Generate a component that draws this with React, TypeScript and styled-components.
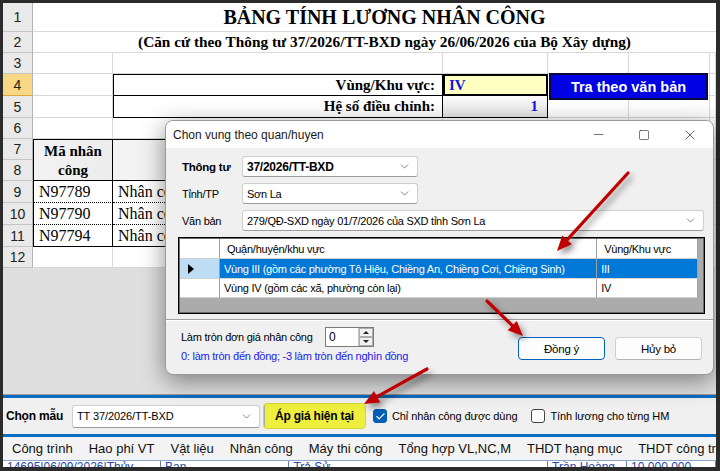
import React from 'react';
import styled, { createGlobalStyle } from 'styled-components';
import { ChevronDown, Minus, Square, X, Check } from 'lucide-react';

const GlobalStyle = createGlobalStyle`
  html, body {
    margin: 0;
    padding: 0;
    background: #2b2b2b;
  }
  * {
    box-sizing: border-box;
  }
`;

type Pt = [number, number];

const Frame = styled.div`
  position: relative;
  width: 720px;
  height: 471px;
  background: #2b2b2b;
  padding: 3px 4px 4px 3px;
  display: flex;
  flex-direction: column;
  overflow: hidden;
  font-family: 'Liberation Sans', Arial, sans-serif;
`;

/* ---------- spreadsheet ---------- */

const SheetArea = styled.div`
  height: 392px;
  background: #dfdfdf;
  border-bottom: 1px solid #9c9c9c;
`;

const Sheet = styled.div`
  display: grid;
  grid-template-columns: 30px 80px 330px 105px 81px 81px 6px;
  grid-template-rows: 29px 21px 21px 22px 22px 21px 21px 21px 22px 22px 22px 21px;
  background: #fff;
  font-family: 'Liberation Serif', 'Times New Roman', serif;
  color: #000;
`;

const RowHead = styled.div<{ $active?: boolean }>`
  background: ${p => (p.$active ? '#f8d884' : '#e9e9e9')};
  border-right: 1px solid #b4b4b4;
  border-bottom: 1px solid ${p => (p.$active ? '#e2a640' : '#c6c6c6')};
  display: flex;
  align-items: center;
  justify-content: center;
  font-family: 'Liberation Sans', Arial, sans-serif;
  font-size: 14px;
  color: #222;
`;

const Cell = styled.div<{ $span?: number; $rows?: number; $align?: 'left' | 'center' | 'right' }>`
  grid-column: span ${p => p.$span ?? 1};
  grid-row: span ${p => p.$rows ?? 1};
  border-right: 1px solid #d8d8d8;
  border-bottom: 1px solid #d8d8d8;
  display: flex;
  align-items: center;
  justify-content: ${p => (p.$align === 'right' ? 'flex-end' : p.$align === 'center' ? 'center' : 'flex-start')};
  white-space: nowrap;
  overflow: hidden;
  min-width: 0;
`;

const Heading = styled(Cell)<{ $size: number }>`
  border-right: none;
  padding-left: 20px;
  font-weight: bold;
  font-size: ${p => p.$size}px;
  overflow: visible;
`;

const LabelCell = styled(Cell)<{ $top?: boolean }>`
  border: 1px solid #000;
  border-top: ${p => (p.$top ? '1px solid #000' : 'none')};
  padding-right: 7px;
  font-weight: bold;
  font-size: 15px;
`;

const InputCell = styled(Cell)`
  border: 2px solid #000;
  background: #ffffc2;
  padding-left: 4px;
  font-weight: bold;
  font-size: 15px;
  color: #1414e6;
`;

const ValueCell = styled(Cell)`
  border-right: 1px solid #000;
  border-bottom: 1px solid #000;
  background: linear-gradient(#fbfbfb, #e6e6e6);
  padding-right: 9px;
  font-weight: bold;
  font-size: 15px;
  color: #1414e6;
`;

const ButtonCell = styled(Cell)`
  overflow: visible;
  align-items: flex-start;
`;

const BlueButton = styled.div`
  position: relative;
  z-index: 1;
  margin: -1px 0 0 1px;
  width: 159px;
  height: 27px;
  background: #0000e4;
  border: 2px solid #0a0a3a;
  color: #fff;
  font-family: 'Liberation Sans', Arial, sans-serif;
  font-weight: bold;
  font-size: 14.5px;
  display: flex;
  align-items: center;
  justify-content: center;
`;

const HeadCell = styled(Cell)<{ $first?: boolean }>`
  border: 1px solid #000;
  border-left: ${p => (p.$first ? '1px solid #000' : 'none')};
  background: linear-gradient(90deg, #f3f3f3, #ececec);
  font-weight: bold;
  font-size: 15px;
  line-height: 19px;
  text-align: center;
  white-space: normal;
  padding-top: 2px;
`;

const DataCell = styled(Cell)<{ $first?: boolean; $last?: boolean }>`
  border-right: 1px solid #000;
  border-left: ${p => (p.$first ? '1px solid #000' : 'none')};
  border-bottom: 1px ${p => (p.$last ? 'solid' : 'dotted')} #000;
  padding-left: 5px;
  font-size: 16px;
`;

/* ---------- dialog ---------- */

const Dialog = styled.div`
  position: absolute;
  left: 165px;
  top: 120px;
  width: 549px;
  height: 255px;
  background: #f0f0f0;
  border: 1px solid #9a9a9a;
  border-radius: 8px;
  box-shadow: 0 6px 24px rgba(0, 0, 0, 0.45);
  display: flex;
  flex-direction: column;
  overflow: hidden;
  font-size: 11px;
  letter-spacing: -0.25px;
  color: #000;
`;

const TitleBar = styled.div`
  height: 27px;
  flex: none;
  background: #fff;
  display: flex;
  align-items: center;
  padding-left: 7px;
  font-size: 12px;
  letter-spacing: 0;
`;

const TitleText = styled.div`
  flex: 1;
  color: #1a1a1a;
`;

const WinButton = styled.div`
  width: 46px;
  height: 27px;
  display: flex;
  align-items: center;
  justify-content: center;
  color: #222;
`;

const DialogBody = styled.div`
  padding: 8px 10px 0 12px;
  display: flex;
  flex-direction: column;
  gap: 6px;
`;

const FormRow = styled.div`
  display: flex;
  align-items: center;
  gap: 6px;
  padding-left: 4px;
`;

const FieldLabel = styled.div<{ $bold?: boolean }>`
  width: 54px;
  flex: none;
  white-space: nowrap;
  font-weight: ${p => (p.$bold ? 'bold' : 'normal')};
  font-size: ${p => (p.$bold ? '11.5px' : '11px')};
`;

const Combo = styled.div<{ $w: number; $bold?: boolean; $h?: number }>`
  width: ${p => p.$w}px;
  height: ${p => p.$h ?? 21}px;
  flex: none;
  background: #fff;
  border: 1px solid #cfcfcf;
  border-bottom-color: #9c9c9c;
  border-radius: 3px;
  display: flex;
  align-items: center;
  padding: 0 6px 0 4px;
  font-weight: ${p => (p.$bold ? 'bold' : 'normal')};
  font-size: ${p => (p.$bold ? '12px' : 'inherit')};
  white-space: nowrap;
`;

const ComboText = styled.span`
  flex: 1;
  overflow: hidden;
`;

const RegionGrid = styled.div`
  width: 527px;
  height: 77px;
  border: 1px solid #000;
  box-shadow: inset 0 0 0 1px #6a6a6a;
  background: #ababab;
  padding: 1px 6px 0 1px;
`;

const GridRow = styled.div<{ $h: number }>`
  display: flex;
  height: ${p => p.$h}px;
`;

const GridCell = styled.div<{ $w: number; $tone?: 'plain' | 'selected' | 'marker'; $pad?: number }>`
  width: ${p => p.$w}px;
  height: 100%;
  display: flex;
  align-items: center;
  padding-left: ${p => p.$pad ?? 4}px;
  border-right: 1px solid #a0a0a0;
  border-bottom: 1px solid ${p => (p.$tone === 'selected' ? '#d6d6d6' : '#d0d0d0')};
  background: ${p =>
    p.$tone === 'selected' ? '#0078d7' : p.$tone === 'marker' ? '#bedcf4' : '#fff'};
  color: ${p => (p.$tone === 'selected' ? '#fff' : '#000')};
  white-space: nowrap;
  overflow: hidden;
`;

const RowMarker = styled.div`
  width: 0;
  height: 0;
  margin-left: 4px;
  border-top: 5px solid transparent;
  border-bottom: 5px solid transparent;
  border-left: 6px solid #000;
`;

const Divider = styled.div`
  margin-top: 5px;
  border-top: 1px solid #a0a0a0;
  border-bottom: 1px solid #fff;
`;

const DialogFooter = styled.div`
  display: flex;
  padding: 6px 11px 0 15px;
`;

const FooterLeft = styled.div`
  flex: 1;
  display: flex;
  flex-direction: column;
  gap: 3px;
`;

const SpinRow = styled.div`
  display: flex;
  align-items: center;
`;

const SpinLabel = styled.div`
  width: 144px;
  white-space: nowrap;
`;

const SpinBox = styled.div`
  width: 49px;
  height: 20px;
  background: #fff;
  border: 1px solid #7a7a7a;
  display: flex;
  align-items: stretch;
  font-size: 12px;
`;

const SpinValue = styled.div`
  flex: 1;
  padding-left: 3px;
  display: flex;
  align-items: center;
`;

const SpinButtons = styled.div`
  width: 15px;
  display: flex;
  flex-direction: column;
  border-left: 1px solid #c8c8c8;
`;

const SpinStep = styled.div<{ $down?: boolean }>`
  flex: 1;
  background: #f2f2f2;
  border: 1px solid #adadad;
  display: flex;
  align-items: center;
  justify-content: center;
  &::after {
    content: '';
    border-left: 3px solid transparent;
    border-right: 3px solid transparent;
    ${p => (p.$down ? 'border-top: 3px solid #222;' : 'border-bottom: 3px solid #222;')}
  }
`;

const Hint = styled.div`
  color: #2020f0;
  white-space: nowrap;
`;

const FooterButtons = styled.div`
  display: flex;
  gap: 10px;
  margin-top: 10px;
  align-self: flex-start;
`;

const DialogButton = styled.div<{ $focused?: boolean }>`
  width: 87px;
  height: 23px;
  background: #fdfdfd;
  border: 1px solid ${p => (p.$focused ? '#0060c0' : '#d0d0d0')};
  border-bottom-color: ${p => (p.$focused ? '#0060c0' : '#b4b4b4')};
  border-radius: 4px;
  display: flex;
  align-items: center;
  justify-content: center;
  font-size: 11.5px;
`;

/* ---------- bottom toolbar and tabs ---------- */

const BlueRule = styled.div`
  height: 3px;
  flex: none;
  background: #0d6cc0;
`;

const Toolbar = styled.div`
  height: 36px;
  flex: none;
  background: #f0f0f0;
  display: flex;
  align-items: center;
  padding-left: 3px;
  font-size: 11px;
  letter-spacing: -0.1px;
  color: #000;
  white-space: nowrap;
`;

const ToolLabel = styled.div`
  font-weight: bold;
  font-size: 12px;
  letter-spacing: -0.2px;
  width: 66px;
`;

const ApplyButton = styled.div`
  margin-left: 3px;
  width: 103px;
  height: 26px;
  border-radius: 4px;
  background: #eeee3e;
  border: 1px solid #d7d73a;
  display: flex;
  align-items: center;
  justify-content: center;
  font-weight: bold;
  font-size: 12px;
  letter-spacing: -0.2px;
  box-shadow: inset 4px 0 0 -3px #a8a8a8;
`;

const CheckItem = styled.div<{ $gap: number }>`
  display: flex;
  align-items: center;
  gap: 5px;
  margin-left: ${p => p.$gap}px;
  font-size: 11px;
`;

const CheckBox = styled.div<{ $checked?: boolean }>`
  width: 14px;
  height: 14px;
  border-radius: 3px;
  border: 1px solid ${p => (p.$checked ? '#005fb8' : '#444')};
  background: ${p => (p.$checked ? '#005fb8' : '#fff')};
  display: flex;
  align-items: center;
  justify-content: center;
  color: #fff;
`;

const Tabs = styled.div`
  height: 24px;
  flex: none;
  background: #f3f3f3;
  display: flex;
  align-items: center;
  padding-left: 1px;
  font-size: 13px;
  color: #111;
  white-space: nowrap;
  overflow: hidden;
  border-bottom: 1px solid #8aa8cc;
`;

const Tab = styled.div`
  padding: 0 8px;
`;

const PeekRow = styled.div`
  height: 6px;
  flex: none;
  background: #fff;
  overflow: hidden;
  display: flex;
  font-size: 12px;
  color: #2a48a8;
  white-space: nowrap;
  line-height: 14px;
`;

const PeekCell = styled.div<{ $w: number }>`
  width: ${p => p.$w}px;
  padding-left: 4px;
  margin-top: -1px;
  border-right: 1px solid #6c7fb8;
  overflow: hidden;
`;

/* ---------- red callout arrows ---------- */

const Overlay = styled.svg`
  position: absolute;
  left: 0;
  top: 0;
  pointer-events: none;
  filter: drop-shadow(3px 4px 3px rgba(0, 0, 0, 0.45));
`;

const arrows: { from: Pt; to: Pt }[] = [
  { from: [628, 173], to: [557, 251] },
  { from: [487, 301], to: [523, 336] },
  { from: [427, 369], to: [364, 404] },
];

function Arrow({ from, to }: { from: Pt; to: Pt }) {
  const dx = to[0] - from[0];
  const dy = to[1] - from[1];
  const len = Math.hypot(dx, dy);
  const ux = dx / len;
  const uy = dy / len;
  const bx = to[0] - ux * 15;
  const by = to[1] - uy * 15;
  const nx = -uy;
  const ny = ux;
  const head = `${to[0]},${to[1]} ${bx + nx * 6.5},${by + ny * 6.5} ${bx - nx * 6.5},${by - ny * 6.5}`;
  return (
    <g>
      <line x1={from[0]} y1={from[1]} x2={bx + ux * 2} y2={by + uy * 2} stroke="#c00000" strokeWidth={3.2} strokeLinecap="round" />
      <polygon points={head} fill="#c00000" />
    </g>
  );
}

const workers = [
  { code: 'N97789', name: 'Nhân công bậc 3,5/7 - Nhóm 1' },
  { code: 'N97790', name: 'Nhân công bậc 4,0/7 - Nhóm 1' },
  { code: 'N97794', name: 'Nhân công bậc 3,0/7 - Nhóm 2' },
];

const regions = [
  { name: 'Vùng III (gồm các phường Tô Hiệu, Chiềng An, Chiềng Cơi, Chiềng Sinh)', zone: 'III' },
  { name: 'Vùng IV (gồm các xã, phường còn lại)', zone: 'IV' },
];

const tabs = ['Công trình', 'Hao phí VT', 'Vật liệu', 'Nhân công', 'Máy thi công', 'Tổng hợp VL,NC,M', 'THDT hạng mục', 'THDT công trình'];

function Blank({ n }: { n: number }) {
  return (
    <>
      {Array.from({ length: n }, (_, i) => (
        <Cell key={i} />
      ))}
    </>
  );
}

export default function App() {
  return (
    <Frame>
      <GlobalStyle />
      <SheetArea>
        <Sheet>
          <RowHead>1</RowHead>
          <Heading $span={6} $size={20} $align="center">BẢNG TÍNH LƯƠNG NHÂN CÔNG</Heading>

          <RowHead>2</RowHead>
          <Heading $span={6} $size={15.3} $align="center">(Căn cứ theo Thông tư 37/2026/TT-BXD ngày 26/06/2026 của Bộ Xây dựng)</Heading>

          <RowHead>3</RowHead>
          <Blank n={6} />

          <RowHead $active>4</RowHead>
          <Cell />
          <LabelCell $top $align="right">Vùng/Khu vực:</LabelCell>
          <InputCell>IV</InputCell>
          <ButtonCell $span={2}>
            <BlueButton>Tra theo văn bản</BlueButton>
          </ButtonCell>
          <Cell />

          <RowHead>5</RowHead>
          <Cell />
          <LabelCell $align="right">Hệ số điều chỉnh:</LabelCell>
          <ValueCell $align="right">1</ValueCell>
          <Blank n={3} />

          <RowHead>6</RowHead>
          <Blank n={6} />

          <RowHead>7</RowHead>
          <HeadCell $rows={2} $first $align="center">Mã nhân<br />công</HeadCell>
          <HeadCell $rows={2} $align="center">Tên nhân công</HeadCell>
          <Blank n={4} />
          <RowHead>8</RowHead>
          <Blank n={4} />

          {workers.map((w, i) => (
            <React.Fragment key={w.code}>
              <RowHead>{9 + i}</RowHead>
              <DataCell $first $last={i === workers.length - 1}>{w.code}</DataCell>
              <DataCell $last={i === workers.length - 1}>{w.name}</DataCell>
              <Blank n={4} />
            </React.Fragment>
          ))}

          <RowHead>12</RowHead>
          <Blank n={6} />
        </Sheet>
      </SheetArea>

      <BlueRule />
      <Toolbar>
        <ToolLabel>Chọn mẫu</ToolLabel>
        <Combo $w={188} $h={23}>
          <ComboText>TT 37/2026/TT-BXD</ComboText>
          <ChevronDown size={13} strokeWidth={1.3} color="#555" />
        </Combo>
        <ApplyButton>Áp giá hiện tại</ApplyButton>
        <CheckItem $gap={7}>
          <CheckBox $checked>
            <Check size={11} strokeWidth={2.4} />
          </CheckBox>
          <span>Chỉ nhân công được dùng</span>
        </CheckItem>
        <CheckItem $gap={14}>
          <CheckBox />
          <span>Tính lương cho từng HM</span>
        </CheckItem>
      </Toolbar>
      <BlueRule />
      <Tabs>
        {tabs.map(t => (
          <Tab key={t}>{t}</Tab>
        ))}
      </Tabs>
      <PeekRow>
        <PeekCell $w={160}>14695|06/09/2026|Thủy</PeekCell>
        <PeekCell $w={130}>Ban</PeekCell>
        <PeekCell $w={262}>Trả Sử</PeekCell>
        <PeekCell $w={80}>Trần Hoàng</PeekCell>
        <PeekCell $w={90}>10.000.000</PeekCell>
      </PeekRow>

      <Dialog>
        <TitleBar>
          <TitleText>Chon vung theo quan/huyen</TitleText>
          <WinButton>
            <Minus size={15} strokeWidth={1} />
          </WinButton>
          <WinButton>
            <Square size={12} strokeWidth={1.2} />
          </WinButton>
          <WinButton>
            <X size={16} strokeWidth={1} />
          </WinButton>
        </TitleBar>
        <DialogBody>
          <FormRow>
            <FieldLabel $bold>Thông tư</FieldLabel>
            <Combo $w={176} $bold>
              <ComboText>37/2026/TT-BXD</ComboText>
              <ChevronDown size={13} strokeWidth={1.3} color="#555" />
            </Combo>
          </FormRow>
          <FormRow>
            <FieldLabel>Tỉnh/TP</FieldLabel>
            <Combo $w={176}>
              <ComboText>Sơn La</ComboText>
              <ChevronDown size={13} strokeWidth={1.3} color="#555" />
            </Combo>
          </FormRow>
          <FormRow>
            <FieldLabel>Văn bản</FieldLabel>
            <Combo $w={462}>
              <ComboText>279/QĐ-SXD ngày 01/7/2026 của SXD tỉnh Sơn La</ComboText>
              <ChevronDown size={13} strokeWidth={1.3} color="#555" />
            </Combo>
          </FormRow>
          <RegionGrid>
            <GridRow $h={20}>
              <GridCell $w={40} />
              <GridCell $w={378} $pad={7}>Quận/huyện/khu vực</GridCell>
              <GridCell $w={101} $pad={7}>Vùng/Khu vực</GridCell>
            </GridRow>
            {regions.map((r, i) => (
              <GridRow key={r.zone} $h={i === 0 ? 20 : 19}>
                <GridCell $w={40} $tone={i === 0 ? 'marker' : 'plain'}>
                  {i === 0 && <RowMarker />}
                </GridCell>
                <GridCell $w={378} $tone={i === 0 ? 'selected' : 'plain'}>{r.name}</GridCell>
                <GridCell $w={101} $tone={i === 0 ? 'selected' : 'plain'}>{r.zone}</GridCell>
              </GridRow>
            ))}
          </RegionGrid>
        </DialogBody>
        <Divider />
        <DialogFooter>
          <FooterLeft>
            <SpinRow>
              <SpinLabel>Làm tròn đơn giá nhân công</SpinLabel>
              <SpinBox>
                <SpinValue>0</SpinValue>
                <SpinButtons>
                  <SpinStep />
                  <SpinStep $down />
                </SpinButtons>
              </SpinBox>
            </SpinRow>
            <Hint>0: làm tròn đến đồng; -3 làm tròn đến nghìn đồng</Hint>
          </FooterLeft>
          <FooterButtons>
            <DialogButton $focused>Đồng ý</DialogButton>
            <DialogButton>Hủy bỏ</DialogButton>
          </FooterButtons>
        </DialogFooter>
      </Dialog>

      <Overlay width={720} height={471} viewBox="0 0 720 471">
        {arrows.map((a, i) => (
          <Arrow key={i} from={a.from} to={a.to} />
        ))}
      </Overlay>
    </Frame>
  );
}
